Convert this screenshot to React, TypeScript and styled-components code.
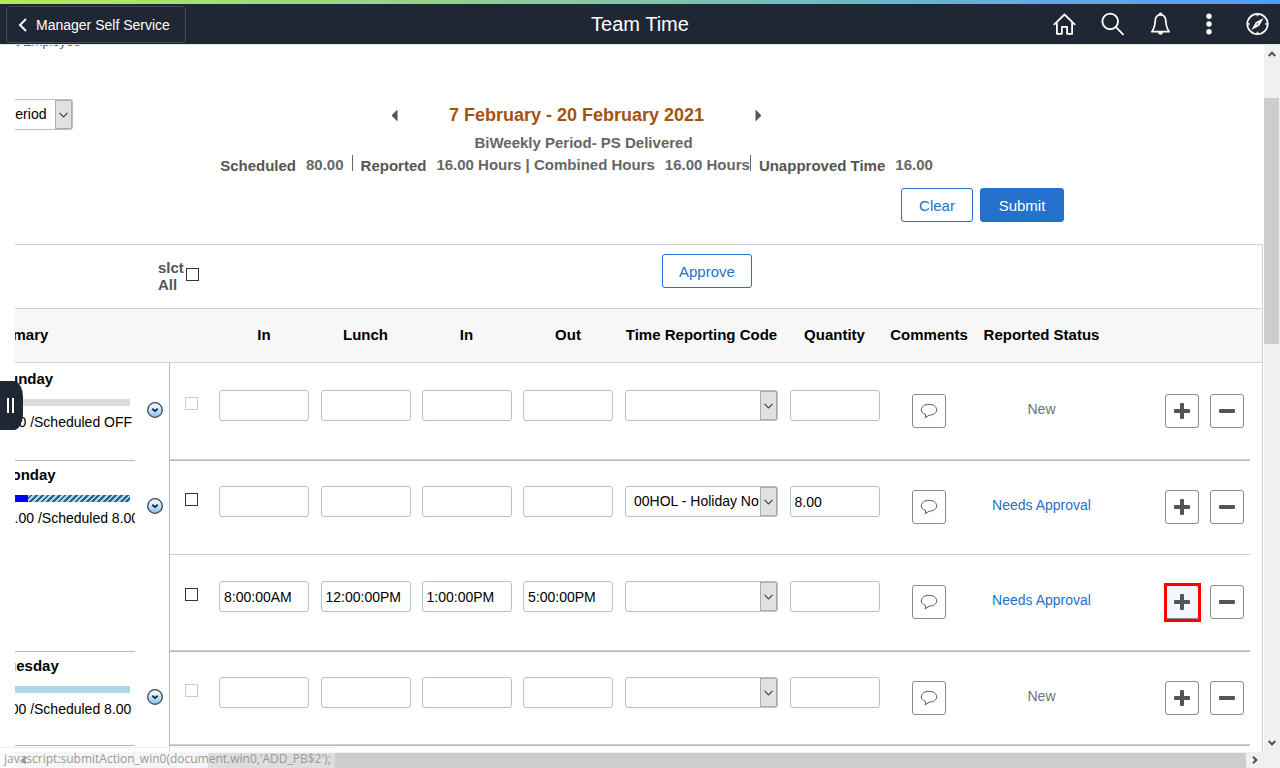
import React from "react";
import styled, { createGlobalStyle, css } from "styled-components";

const ink = "#1e2733";
const blue = "#2470ca";
const line = "#cdd1db";
const strong = "#b7b8ba";

const Global = createGlobalStyle`
  *, *::before, *::after { box-sizing: border-box; }
  body { margin: 0; background: #fff; color: #000; font: 14px/17px "Liberation Sans", Arial, sans-serif; }
  button, input, select { font: inherit; color: inherit; margin: 0; }
`;

const Page = styled.div`
  position: relative;
  display: flex;
  flex-direction: column;
  height: 100vh;
  overflow: hidden;
`;

const Stripe = styled.div`
  flex: none;
  height: 4px;
  background: linear-gradient(90deg, #b5ec54, #4f9cff);
`;

const Banner = styled.header`
  flex: none;
  display: grid;
  grid-template-columns: 1fr auto 1fr;
  align-items: center;
  height: 41px;
  padding: 0 8px 0 6px;
  background: ${ink};
  border-bottom: 1px solid #e3e6ea;
  color: #fff;
`;

const BackButton = styled.button`
  justify-self: start;
  display: flex;
  align-items: center;
  gap: 8px;
  height: 37px;
  padding: 2px 15px 0 11px;
  border: 1px solid #434b56;
  border-radius: 4px;
  background: none;
`;

const Title = styled.h1`
  margin: 0;
  padding-left: 2px;
  font-size: 20px;
  line-height: 24px;
  font-weight: 400;
`;

const Tools = styled.nav`
  justify-self: end;
  display: flex;
  gap: 18px;
`;

const ToolButton = styled.button`
  display: grid;
  place-items: center;
  width: 30px;
  height: 30px;
  padding: 0;
  border: 0;
  background: none;
`;

const Body = styled.div`
  flex: 1;
  min-height: 0;
  display: flex;
`;

const Gutter = styled.aside`
  flex: none;
  position: relative;
  width: 15px;
`;

const DrawerHandle = styled.button`
  position: absolute;
  left: 0;
  top: 336px;
  display: flex;
  align-items: center;
  gap: 3px;
  width: 23px;
  height: 49px;
  padding: 0 0 0 7px;
  border: 0;
  border-radius: 0 9px 9px 0 / 0 16px 16px 0;
  background: ${ink};
  &::before, &::after {
    content: "";
    width: 2px;
    height: 15px;
    background: #fff;
  }
`;

const Column = styled.div`
  flex: 1;
  min-width: 0;
  display: flex;
  flex-direction: column;
`;

const Pane = styled.main`
  flex: 1;
  min-height: 0;
  overflow: hidden;
`;

const Sheet = styled.div`
  display: flex;
  flex-direction: column;
  min-height: 100%;
  margin-left: -35px;
`;

const Overview = styled.section`
  display: flex;
  flex-direction: column;
  margin: -12px 91px 22px 0;
  color: #666;
`;

const EmployeeLink = styled.a`
  align-self: flex-start;
  margin-left: 3px;
  color: ${blue};
  font-size: 13px;
  text-decoration: none;
`;

const PeriodRow = styled.div`
  display: grid;
  grid-template-columns: 1fr 370px 1fr;
  align-items: center;
  margin-top: 49px;
`;

const PeriodPicker = styled.div`
  justify-self: start;
  margin-left: 17px;
`;

const PeriodNav = styled.div`
  display: flex;
  align-items: center;
  justify-content: space-between;
`;

const NavArrow = styled.button<{ $next?: boolean }>`
  width: 6px;
  height: 12px;
  margin-top: 2px;
  padding: 0;
  border: 0;
  background: #555;
  clip-path: ${(p) => (p.$next ? "polygon(0 0, 100% 50%, 0 100%)" : "polygon(100% 0, 0 50%, 100% 100%)")};
`;

const PeriodTitle = styled.h2`
  margin: 0;
  color: #a3530f;
  font-size: 18px;
  line-height: 20px;
`;

const Schedule = styled.p`
  margin: 4px 0 0;
  padding-left: 14px;
  font-size: 15px;
  font-weight: 700;
  text-align: center;
`;

const Totals = styled.dl`
  display: flex;
  justify-content: center;
  margin: 4px 0 0;
  font-size: 15px;
  font-weight: 700;
`;

const Total = styled.div`
  display: flex;
  & + & { padding-left: 8px; }
  & + &::before {
    content: "";
    width: 1px;
    height: 16px;
    margin-right: 8px;
    background: #666;
  }
  &:last-child { padding-left: 0; }
`;

const TotalLabel = styled.dt`
  padding-top: 2px;
  color: #555;
`;

const TotalValue = styled.dd`
  margin: 0 0 0 10px;
  padding-top: 1px;
`;

const Buttons = styled.div`
  display: flex;
  justify-content: flex-end;
  gap: 7px;
  margin-top: 14px;
  padding-right: 109px;
`;

const Button = styled.button<{ $primary?: boolean }>`
  min-width: ${(p) => (p.$primary ? 84 : 72)}px;
  height: 34px;
  padding: 0 16px;
  border: 1px solid ${blue};
  border-radius: 3px;
  background: ${(p) => (p.$primary ? blue : "#fff")};
  color: ${(p) => (p.$primary ? "#fff" : blue)};
  font-size: 15px;
`;

const Grid = styled.section`
  flex: 1;
  margin-right: 1px;
  border: solid ${line};
  border-width: 1px 1px 0 0;
`;

const GridTools = styled.div`
  display: flex;
  align-items: flex-start;
  gap: 463px;
  height: 63px;
  padding: 9px 0 0 178px;
`;

const SelectAll = styled.label`
  display: flex;
  align-items: flex-start;
  gap: 3px;
  padding-top: 5px;
  color: #555;
  font-size: 15px;
  font-weight: 700;
`;

const SelectAllText = styled.span`
  width: 25px;
`;

const Check = styled.input.attrs({ type: "checkbox" })<{ $top?: number }>`
  display: block;
  flex: none;
  appearance: none;
  width: 13px;
  height: 13px;
  margin-top: ${(p) => p.$top ?? 0}px;
  border: 1px solid #333;
  background: #fff;
  &:disabled { border-color: #ccc; }
`;

const Table = styled.table`
  width: 100%;
  table-layout: fixed;
  border-spacing: 0;
`;

const Col = styled.col<{ $w?: number }>`
  ${(p) => p.$w && css`width: ${p.$w}px;`}
`;

const HeadCell = styled.th`
  height: 55px;
  padding: 0 0 2px;
  border: solid ${line};
  border-width: 1px 0;
  background: #f7f7f7;
  font-size: 15px;
  text-align: center;
  white-space: nowrap;
  &:first-child { text-align: left; }
`;

type Edge = "none" | "thin" | "day";

const edges = {
  none: css`border-top: 1px solid transparent;`,
  thin: css`border-top: 1px solid #cfcfd1;`,
  day: css`border-top: 1px solid ${line}; box-shadow: inset 0 1px ${strong};`,
};

const Cell = styled.td<{ $edge: Edge; $top: number; $align?: string }>`
  padding: ${(p) => p.$top}px 0 0;
  vertical-align: top;
  text-align: ${(p) => p.$align ?? "center"};
  ${(p) => edges[p.$edge]}
`;

const SummaryCell = styled.th<{ $edge: Edge }>`
  overflow: hidden;
  padding: 6px 0 0 19px;
  border-top: 1px solid transparent;
  vertical-align: top;
  text-align: left;
  font-weight: 400;
  white-space: nowrap;
  ${(p) => p.$edge === "day" && css`box-shadow: inset 0 1px ${strong};`}
`;

const DetailCell = styled.td`
  padding: 38px 0 0 12px;
  border-right: 1px solid ${strong};
  vertical-align: top;
`;

const CheckCell = styled(Cell)`
  padding-left: 15px;
`;

const Row = styled.tr<{ $height: number }>`
  height: ${(p) => p.$height}px;
`;

const DayName = styled.strong`
  display: block;
  font-size: 15px;
`;

const bars = {
  off: css`background: #dcdcdc;`,
  mixed: css`background: linear-gradient(90deg, #00f 29px, transparent 29px), repeating-linear-gradient(135deg, #add8e6 0 2px, #2b5f8c 2px 4px);`,
  open: css`background: #add8e6;`,
};

const Bar = styled.div<{ $kind: keyof typeof bars }>`
  height: 7px;
  margin: 12px 5px 8px 0;
  ${(p) => bars[p.$kind]}
`;

const DetailButton = styled.button`
  display: block;
  width: 16px;
  height: 16px;
  margin-top: 1px;
  padding: 0;
  border: 0;
  background: none;
`;

const Field = styled.input`
  display: block;
  width: 90px;
  height: 31px;
  margin: 0 auto;
  padding: 0 4px;
  border: 1px solid #b9c0cb;
  border-radius: 3px;
  background: #fff;
`;

const SelectFrame = styled.div<{ $width: number }>`
  position: relative;
  width: ${(p) => p.$width}px;
  margin: 0 auto;
  color: #000;
`;

const SelectBox = styled.select`
  appearance: none;
  display: block;
  width: 100%;
  height: 31px;
  padding: 0 18px 0 8px;
  border: 1px solid #b9c0cb;
  border-radius: 3px;
  background: #fff;
`;

const SelectArrow = styled.span`
  position: absolute;
  top: 1px;
  right: 1px;
  bottom: 1px;
  display: grid;
  place-items: center;
  width: 17px;
  border: 1px solid #adadb0;
  background: #e1e1e1;
  pointer-events: none;
`;

const IconButton = styled.button<{ $marked?: boolean }>`
  position: relative;
  display: grid;
  place-items: center;
  flex: none;
  width: 34px;
  height: 34px;
  padding: 0;
  border: 1px solid #848c96;
  border-radius: 3px;
  background: #fff;
  ${(p) =>
    p.$marked &&
    css`
      background: #f3f7fd;
      &::after {
        content: "";
        position: absolute;
        inset: -3px -3px -4px -2px;
        border: 3px solid #f00;
      }
    `}
`;

const CommentSlot = styled.div`
  display: flex;
  justify-content: center;
`;

const Actions = styled.div`
  display: flex;
  justify-content: flex-end;
  gap: 11px;
  padding-right: 6px;
`;

const StatusText = styled.span`
  color: #6d7178;
`;

const StatusLink = styled.a`
  color: ${blue};
  text-decoration: none;
`;

const VerticalBar = styled.div`
  flex: none;
  display: flex;
  flex-direction: column;
  align-items: center;
  width: 16px;
  padding: 5px 1px 21px 0;
  background: #f0f0f0;
`;

const HorizontalBar = styled.div`
  flex: none;
  display: flex;
  align-items: center;
  height: 16px;
  padding: 0 5px;
  background: #f0f0f0;
`;

const VerticalThumb = styled.div`
  width: 15px;
  height: 246px;
  margin: 40px 0 auto;
  background: #cdcdcd;
`;

const HorizontalThumb = styled.div`
  flex: 1;
  height: 15px;
  margin: 0 5px 0 180px;
  background: #cdcdcd;
`;

const LinkHint = styled.div`
  position: absolute;
  left: 0;
  bottom: 0;
  height: 21px;
  padding: 2px 4px 0;
  border-top: 1px solid #f1f1f1;
  background: rgba(255, 255, 255, 0.35);
  color: #999;
  font: 12px/17px "Open Sans", sans-serif;
`;

const Chevron = ({ turn = 0 }: { turn?: number }) => (
  <svg width="8" height="8" viewBox="0 0 8 8" fill="none" stroke="#505050" strokeWidth="2" aria-hidden="true">
    <path d="M.7 6 4 2.700 7.300 6" transform={`rotate(${turn} 4 4)`} />
  </svg>
);

const HomeIcon = () => (
  <svg width="24" height="24" viewBox="0 0 24 24" fill="none" stroke="#fff" strokeWidth="1.800" strokeLinejoin="round" strokeLinecap="round">
    <path d="M1.300 12.400 11.500 2.500l10.200 9.900" />
    <path d="M3.900 11v10.800h5v-7h5.200v7h5V11" />
  </svg>
);

const SearchIcon = () => (
  <svg width="24" height="24" viewBox="0 0 24 24" fill="none" stroke="#fff" strokeWidth="1.900" strokeLinecap="round">
    <circle cx="9.200" cy="9.400" r="7.800" />
    <path d="m15 15.200 7 7.100" />
  </svg>
);

const BellIcon = () => (
  <svg width="24" height="24" viewBox="0 0 24 24" fill="none" stroke="#fff" strokeWidth="1.700" strokeLinejoin="round">
    <path d="M11.500 2.800c-3.400 0-5.100 2.600-5.300 6-.2 4.800-.8 7.500-3.400 10.900h17.400c-2.600-3.400-3.200-6.100-3.400-10.900-.2-3.400-1.900-6-5.300-6Z" />
    <path d="M9.600 2.700a1.900 1.900 0 0 1 3.800 0ZM9.200 20.200a2.300 2.300 0 0 0 4.600 0Z" fill="#fff" strokeWidth=".5" />
  </svg>
);

const MoreIcon = () => (
  <svg width="24" height="24" viewBox="0 0 24 24" fill="#fff">
    <circle cx="12" cy="4.300" r="2.700" />
    <circle cx="12" cy="12" r="2.700" />
    <circle cx="12" cy="19.700" r="2.700" />
  </svg>
);

const CompassIcon = () => (
  <svg width="24" height="24" viewBox="0 0 24 24" fill="none" stroke="#fff" strokeWidth="1.700">
    <circle cx="12.500" cy="12" r="10.200" />
    <path d="M12.500 2v2.300M12.500 19.700V22M2.500 12h2.300M20.200 12h2.300" strokeWidth="1.500" />
    <path d="M18.600 5.900 14.300 13.800 6.400 18.100 10.700 10.200Z" fill="#fff" stroke="none" />
    <circle cx="12.500" cy="12" r=".8" fill="#1e2733" stroke="none" />
  </svg>
);

const BackIcon = () => (
  <svg width="10" height="14" viewBox="0 0 10 14" fill="none" stroke="#fff" strokeWidth="2">
    <path d="M8 1 2 7l6 6" />
  </svg>
);

const DetailIcon = () => (
  <svg width="16" height="16" viewBox="0 0 16 16" fill="none">
    <defs>
      <linearGradient id="glass" x1="0" y1="0" x2="0" y2="1">
        <stop offset=".25" stopColor="#e9f4fd" />
        <stop offset="1" stopColor="#7fc0f5" />
      </linearGradient>
    </defs>
    <circle cx="8" cy="8" r="7.300" fill="url(#glass)" stroke="#3d4550" strokeWidth="1.300" />
    <path d="m5.300 6.800 2.700 2.300 2.700-2.300" stroke="#1d2732" strokeWidth="1.900" />
  </svg>
);

const CommentIcon = () => (
  <svg width="18" height="16" viewBox="0 0 18 16" fill="none" stroke="#555" strokeWidth="1">
    <path d="M5.300 11.300C2.600 10.400 1.300 8.600 1.300 6.900c0-3.200 3.400-5.600 7.700-5.600s7.700 2.400 7.700 5.500-3.200 5.200-7.400 5.400L5 14.800c.7-1.200.8-2.300.3-3.500Z" />
  </svg>
);

const PlusIcon = () => (
  <svg width="16" height="16" viewBox="0 0 16 16" fill="#555">
    <rect x="6" y="0" width="4" height="16" rx="1" />
    <rect x="0" y="6" width="16" height="4" rx="1" />
  </svg>
);

const MinusIcon = () => (
  <svg width="16" height="16" viewBox="0 0 16 16" fill="#555">
    <rect x="0" y="6" width="16" height="4" rx="1" />
  </svg>
);

const Dropdown = ({ label, value, width }: { label: string; value: string; width: number }) => (
  <SelectFrame $width={width}>
    <SelectBox aria-label={label} defaultValue={value}>
      <option value={value}>{value}</option>
    </SelectBox>
    <SelectArrow>
      <svg width="9" height="6" viewBox="0 0 9 6" fill="none" stroke="#444" strokeWidth="1.200">
        <path d="m.5.8 4 4 4-4" />
      </svg>
    </SelectArrow>
  </SelectFrame>
);

type Entry = { times: string[]; code: string; quantity: string; pending: boolean; height: number; marked?: boolean };
type Day = { name: string; hours: string; bar: keyof typeof bars; entries: Entry[] };

const blank = { times: ["", "", "", ""], code: "", quantity: "", pending: false };

const days: Day[] = [
  { name: "Sunday", hours: "0.00 /Scheduled OFF", bar: "off", entries: [{ ...blank, height: 96 }] },
  {
    name: "Monday",
    hours: "16.00 /Scheduled 8.00",
    bar: "mixed",
    entries: [
      { times: ["", "", "", ""], code: "00HOL - Holiday Non", quantity: "8.00", pending: true, height: 95 },
      { times: ["8:00:00AM", "12:00:00PM", "1:00:00PM", "5:00:00PM"], code: "", quantity: "", pending: true, height: 96, marked: true },
    ],
  },
  { name: "Tuesday", hours: "0.00 /Scheduled 8.00", bar: "open", entries: [{ ...blank, height: 94 }] },
];

const timeLabels = ["In", "Lunch", "In", "Out"];
const columns = [155, 35, 43, 102, 101, 101, 102, 165, 101, 88, 137, undefined, 12];

const DayRows = ({ day, first }: { day: Day; first: boolean }) => (
  <>
    {day.entries.map((entry, i) => {
      const edge: Edge = i > 0 ? "thin" : first ? "none" : "day";
      return (
        <Row key={i} $height={entry.height}>
          {i === 0 && (
            <>
              <SummaryCell scope="rowgroup" rowSpan={day.entries.length} $edge={edge}>
                <DayName>{day.name}</DayName>
                <Bar $kind={day.bar} />
                {day.hours}
              </SummaryCell>
              <DetailCell rowSpan={day.entries.length}>
                <DetailButton type="button" aria-label={`${day.name} details`}>
                  <DetailIcon />
                </DetailButton>
              </DetailCell>
            </>
          )}
          <CheckCell $edge={edge} $top={33}>
            <Check aria-label={`Select ${day.name}`} disabled={!entry.pending} />
          </CheckCell>
          {entry.times.map((time, t) => (
            <Cell key={t} $edge={edge} $top={26}>
              <Field aria-label={`${day.name} ${timeLabels[t]}`} defaultValue={time} />
            </Cell>
          ))}
          <Cell $edge={edge} $top={26}>
            <Dropdown label={`${day.name} Time Reporting Code`} value={entry.code} width={153} />
          </Cell>
          <Cell $edge={edge} $top={26}>
            <Field aria-label={`${day.name} Quantity`} defaultValue={entry.quantity} />
          </Cell>
          <Cell $edge={edge} $top={30}>
            <CommentSlot>
              <IconButton type="button" aria-label="Comments"><CommentIcon /></IconButton>
            </CommentSlot>
          </Cell>
          <Cell $edge={edge} $top={37}>
            {entry.pending ? <StatusLink href="#status">Needs Approval</StatusLink> : <StatusText>New</StatusText>}
          </Cell>
          <Cell $edge={edge} $top={30}>
            <Actions>
              <IconButton type="button" aria-label="Add row" $marked={entry.marked}><PlusIcon /></IconButton>
              <IconButton type="button" aria-label="Delete row"><MinusIcon /></IconButton>
            </Actions>
          </Cell>
          <td />
        </Row>
      );
    })}
  </>
);

export default function App() {
  return (
    <Page>
      <Global />
      <Stripe />
      <Banner>
        <BackButton type="button"><BackIcon />Manager Self Service</BackButton>
        <Title>Team Time</Title>
        <Tools>
          <ToolButton type="button" aria-label="Home"><HomeIcon /></ToolButton>
          <ToolButton type="button" aria-label="Search"><SearchIcon /></ToolButton>
          <ToolButton type="button" aria-label="Notifications"><BellIcon /></ToolButton>
          <ToolButton type="button" aria-label="Actions"><MoreIcon /></ToolButton>
          <ToolButton type="button" aria-label="Navigator"><CompassIcon /></ToolButton>
        </Tools>
      </Banner>
      <Body>
        <Gutter>
          <DrawerHandle type="button" aria-label="Open side panel" />
        </Gutter>
        <Column>
          <Pane>
            <Sheet>
              <Overview>
                <EmployeeLink href="#employee">Select Employee</EmployeeLink>
                <PeriodRow>
                  <PeriodPicker>
                    <Dropdown label="View by" value="Period" width={76} />
                  </PeriodPicker>
                  <PeriodNav>
                    <NavArrow type="button" aria-label="Previous period" />
                    <PeriodTitle>7 February - 20 February 2021</PeriodTitle>
                    <NavArrow type="button" aria-label="Next period" $next />
                  </PeriodNav>
                </PeriodRow>
                <Schedule>BiWeekly Period- PS Delivered</Schedule>
                <Totals>
                  <Total><TotalLabel>Scheduled</TotalLabel><TotalValue>80.00</TotalValue></Total>
                  <Total>
                    <TotalLabel>Reported</TotalLabel>
                    <TotalValue>16.00 Hours | Combined Hours</TotalValue>
                    <TotalValue>16.00 Hours</TotalValue>
                  </Total>
                  <Total><TotalLabel>Unapproved Time</TotalLabel><TotalValue>16.00</TotalValue></Total>
                </Totals>
                <Buttons>
                  <Button type="button">Clear</Button>
                  <Button type="button" $primary>Submit</Button>
                </Buttons>
              </Overview>
              <Grid>
                <GridTools>
                  <SelectAll><SelectAllText>slct All</SelectAllText><Check $top={9} /></SelectAll>
                  <Button type="button">Approve</Button>
                </GridTools>
                <Table>
                  <colgroup>
                    {columns.map((w, i) => <Col key={i} $w={w} />)}
                  </colgroup>
                  <thead>
                    <tr>
                      <HeadCell scope="col">Summary</HeadCell>
                      <HeadCell as="td" />
                      <HeadCell as="td" />
                      {timeLabels.map((label, i) => <HeadCell scope="col" key={i}>{label}</HeadCell>)}
                      <HeadCell scope="col">Time Reporting Code</HeadCell>
                      <HeadCell scope="col">Quantity</HeadCell>
                      <HeadCell scope="col">Comments</HeadCell>
                      <HeadCell scope="col">Reported Status</HeadCell>
                      <HeadCell as="td" />
                      <HeadCell as="td" />
                    </tr>
                  </thead>
                  <tbody>
                    {days.map((day, i) => <DayRows key={day.name} day={day} first={i === 0} />)}
                    <Row $height={20}>
                      <SummaryCell as="td" $edge="day" />
                      <DetailCell />
                      <Cell colSpan={10} $edge="day" $top={0} />
                      <td />
                    </Row>
                  </tbody>
                </Table>
              </Grid>
            </Sheet>
          </Pane>
          <HorizontalBar>
            <Chevron turn={-90} />
            <HorizontalThumb />
            <Chevron turn={90} />
          </HorizontalBar>
        </Column>
        <VerticalBar>
          <Chevron />
          <VerticalThumb />
          <Chevron turn={180} />
        </VerticalBar>
      </Body>
      <LinkHint>javascript:submitAction_win0(document.win0,'ADD_PB$2');</LinkHint>
    </Page>
  );
}
